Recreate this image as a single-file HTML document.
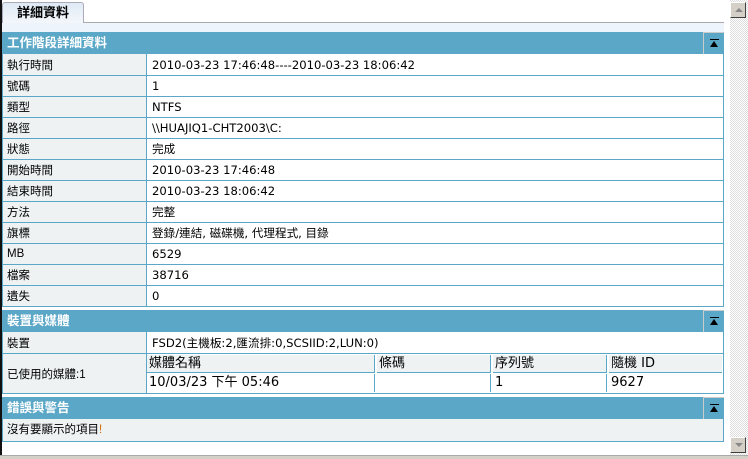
<!DOCTYPE html>
<html><head><meta charset="utf-8"><style>
*{margin:0;padding:0;box-sizing:border-box}
body{width:748px;height:459px;overflow:hidden;background:#fff;position:relative;font-family:"Liberation Sans","Noto Sans CJK TC",sans-serif;font-size:11.5px;color:#000}
.a{position:absolute}
.hdr{position:absolute;left:2px;width:722px;height:22px;background:#5ba7c7;color:#fff;font-weight:bold;font-size:12.5px;line-height:22px;padding-left:5px}
.btn{position:absolute;right:0;top:0;width:21px;height:22px;border-left:1px solid #ccc;border-top:1px solid #ccc;background:#5ba7c7}
.btn:before{content:"";position:absolute;left:6px;top:6px;width:9px;height:1px;background:#000}
.btn:after{content:"";position:absolute;left:6px;top:8px;border-left:4.5px solid transparent;border-right:4.5px solid transparent;border-bottom:6px solid #000}
.row{position:absolute;left:2px;width:722px;border-left:1px solid #5ba7c7;border-right:1px solid #5ba7c7;border-bottom:1px solid #5ba7c7}
.l{position:absolute;left:0;top:0;bottom:0;width:144px;background:#eef2f3;border-right:1px solid #5ba7c7;padding-left:4px;display:flex;align-items:center}
.v{position:absolute;left:149px;top:0;bottom:0;display:flex;align-items:center;font-family:"DejaVu Sans","Noto Sans CJK TC",sans-serif;font-size:11.6px;white-space:nowrap}
.mc{position:absolute;height:18px;line-height:18px;padding-left:2px;font-size:13px;font-family:"DejaVu Sans","Noto Sans CJK TC",sans-serif;white-space:nowrap}
</style></head><body>
<div class="a" style="left:0;top:0;width:2px;height:459px;background:#111"></div>
<div class="a" style="left:2px;top:22px;width:722px;height:10px;background:#eef4fb;border-top:1px solid #aaa"></div>
<div class="a" style="left:2px;top:2px;width:82px;height:21px;background:linear-gradient(#dfeaf5,#f3f7fb);border:1px solid #aab;border-bottom:none;border-radius:3px 3px 0 0;font-weight:bold;font-size:13px;text-align:center;line-height:20px">詳細資料</div>

<div class="hdr" style="top:32px">工作階段詳細資料<div class="btn"></div></div>
<div class="row" style="top:54px;height:22px"><div class="l">執行時間</div><div class="v">2010-03-23 17:46:48----2010-03-23 18:06:42</div></div>
<div class="row" style="top:76px;height:21px"><div class="l">號碼</div><div class="v">1</div></div>
<div class="row" style="top:97px;height:21px"><div class="l">類型</div><div class="v">NTFS</div></div>
<div class="row" style="top:118px;height:21px"><div class="l">路徑</div><div class="v">\\HUAJIQ1-CHT2003\C:</div></div>
<div class="row" style="top:139px;height:21px"><div class="l">狀態</div><div class="v">完成</div></div>
<div class="row" style="top:160px;height:21px"><div class="l">開始時間</div><div class="v">2010-03-23 17:46:48</div></div>
<div class="row" style="top:181px;height:21px"><div class="l">結束時間</div><div class="v">2010-03-23 18:06:42</div></div>
<div class="row" style="top:202px;height:21px"><div class="l">方法</div><div class="v">完整</div></div>
<div class="row" style="top:223px;height:21px"><div class="l">旗標</div><div class="v">登錄/連結, 磁碟機, 代理程式, 目錄</div></div>
<div class="row" style="top:244px;height:21px"><div class="l">MB</div><div class="v">6529</div></div>
<div class="row" style="top:265px;height:21px"><div class="l">檔案</div><div class="v">38716</div></div>
<div class="row" style="top:286px;height:21px"><div class="l">遺失</div><div class="v">0</div></div>

<div class="hdr" style="top:310px">裝置與媒體<div class="btn"></div></div>
<div class="row" style="top:332px;height:22px"><div class="l">裝置</div><div class="v">FSD2(主機板:2,匯流排:0,SCSIID:2,LUN:0)</div></div>
<div class="row" style="top:354px;height:40px"><div class="l">已使用的媒體:1</div>
 <div class="mc" style="left:144px;top:1px;width:228px;background:#eef2f3;border-bottom:1px solid #5ba7c7;border-right:1px solid #5ba7c7">媒體名稱</div>
 <div class="mc" style="left:374px;top:1px;width:114px;background:#eef2f3;border-bottom:1px solid #5ba7c7;border-right:1px solid #5ba7c7">條碼</div>
 <div class="mc" style="left:490px;top:1px;width:114px;background:#eef2f3;border-bottom:1px solid #5ba7c7;border-right:1px solid #5ba7c7">序列號</div>
 <div class="mc" style="left:606px;top:1px;width:113px;background:#eef2f3;border-bottom:1px solid #5ba7c7">隨機 ID</div>
 <div class="mc" style="left:144px;top:20px;width:228px;border-right:1px solid #5ba7c7">10/03/23 下午 05:46</div>
 <div class="mc" style="left:374px;top:20px;width:114px;border-right:1px solid #5ba7c7"></div>
 <div class="mc" style="left:490px;top:20px;width:114px;border-right:1px solid #5ba7c7">1</div>
 <div class="mc" style="left:606px;top:20px;width:113px">9627</div>
</div>

<div class="hdr" style="top:397px">錯誤與警告<div class="btn"></div></div>
<div class="row" style="top:419px;height:23px;background:#eef2f3"><div style="padding-left:4px;line-height:22px">沒有要顯示的項目<span style="color:#c60">!</span></div></div>

<div class="a" style="left:0;top:455px;width:748px;height:4px;background:#d4d0c8;border-top:1px solid #aaa"></div>
<div class="a" style="left:730px;top:0;width:18px;height:455px;background:repeating-conic-gradient(#fff 0 25%,#ddd 0 50%) 0 0/2px 2px"></div>
<div class="a" style="left:730px;top:2px;width:16px;height:16px;background:#d4d0c8;border:1px solid;border-color:#fff #404040 #404040 #fff"><div style="position:absolute;left:4px;top:5px;border-left:4px solid transparent;border-right:4px solid transparent;border-bottom:4px solid #888"></div></div>
<div class="a" style="left:730px;top:437px;width:16px;height:16px;background:#d4d0c8;border:1px solid;border-color:#fff #404040 #404040 #fff"><div style="position:absolute;left:4px;top:5px;border-left:4px solid transparent;border-right:4px solid transparent;border-top:4px solid #888"></div></div>
</body></html>
